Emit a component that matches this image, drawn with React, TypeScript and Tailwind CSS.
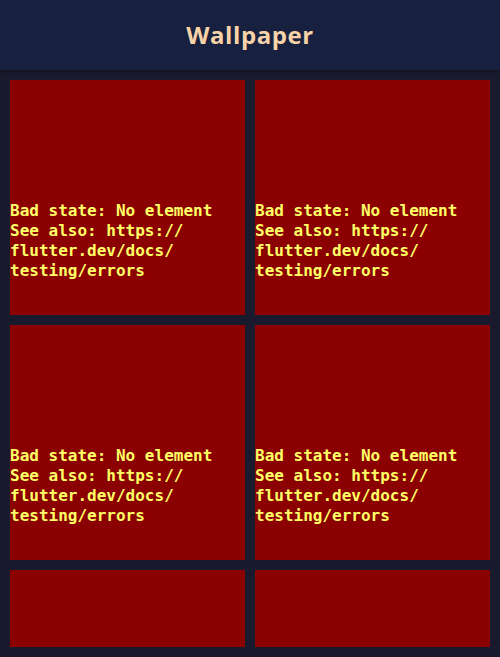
import React from 'react';

const tiles = [true, true, true, true, false, false];

function ErrorTile({ showText }: { showText: boolean }) {
  return (
    <div className="h-[235px] overflow-hidden bg-[#8b0000] pt-[121px]">
      {showText && (
        <p className="font-['DejaVu_Sans_Mono',monospace] text-[16px] leading-[20px] font-bold text-[#ffff66] break-words">
          Bad state: No element
          <br />
          See also: https://
          <br />
          flutter.dev/docs/
          <br />
          testing/errors
        </p>
      )}
    </div>
  );
}

export default function App() {
  return (
    <div className="h-[657px] w-[500px] overflow-hidden bg-[#1a1a2e] flex flex-col">
      <header className="h-[70px] shrink-0 bg-[#17213f] flex items-center justify-center shadow-[0_2px_4px_rgba(0,0,0,0.35)] relative z-10">
        <h1 className="font-['Open_Sans',sans-serif] text-[24px] font-bold tracking-[0.6px] text-[#f8d3a8]">
          Wallpaper
        </h1>
      </header>
      <div className="flex-1 min-h-0 p-[10px]">
        <div className="h-full overflow-hidden">
          <div className="grid grid-cols-2 gap-[10px]">
            {tiles.map((t, i) => (
              <ErrorTile key={i} showText={t} />
            ))}
          </div>
        </div>
      </div>
    </div>
  );
}
